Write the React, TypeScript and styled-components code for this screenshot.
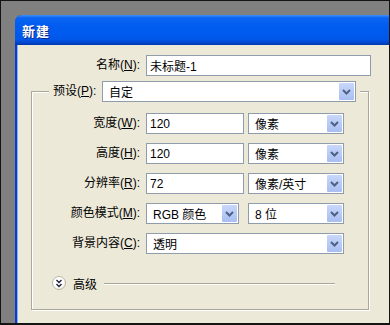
import styled, { createGlobalStyle } from 'styled-components';

const GlobalStyle = createGlobalStyle`
  html, body {
    margin: 0;
    padding: 0;
  }
  body {
    font-family: "Liberation Sans", "Noto Sans CJK SC", sans-serif;
    font-size: 12px;
    color: #000;
  }
`;

const Screen = styled.div`
  box-sizing: border-box;
  width: 390px;
  height: 325px;
  border: 1px solid #141414;
  border-bottom-width: 2px;
  background: #808080;
  padding: 14px 0 0 14px;
  overflow: hidden;
`;

const Window = styled.div`
  width: 400px;
  height: 330px;
  display: flex;
  flex-direction: column;
  border-radius: 7px 7px 0 0;
  overflow: hidden;
  background: #0a3cd0;
`;

const TitleBar = styled.div`
  flex: none;
  height: 30px;
  display: flex;
  align-items: center;
  padding-left: 7px;
  background: linear-gradient(
    #3d8ff8 0,
    #0a63f2 3px,
    #005cf0 40%,
    #0058ea 80%,
    #0047cf 92%,
    #0036a8 100%
  );
  color: #fff;
  font-weight: bold;
  font-size: 13px;
  letter-spacing: 1px;
  text-shadow: 1px 1px 0 #0a2a8a;
`;

const Body = styled.div`
  flex: 1;
  border-left: 2px solid #0b3bc9;
  box-shadow: inset 1px 0 0 #86aef2;
  background: #ece9d8;
  padding: 10px 0 0 14px;
`;

const Row = styled.div<{ $labelWidth: number }>`
  display: flex;
  align-items: center;
  height: 21px;

  & > label {
    width: ${(p) => p.$labelWidth}px;
  }
`;

const Label = styled.label`
  flex: none;
  text-align: right;
  margin-right: 6px;
  white-space: nowrap;
  font-family: "Liberation Sans", "Noto Sans CJK SC", sans-serif;
  font-size: 12px;
  line-height: 21px;

  u {
    text-underline-offset: 1px;
  }
`;

const TextBox = styled.div<{ $width: number }>`
  box-sizing: border-box;
  width: ${(p) => p.$width}px;
  height: 21px;
  border: 1px solid #8e9cab;
  background: #fff;
  padding-left: 3px;
  display: flex;
  align-items: center;
  font-family: "Liberation Sans", "Noto Sans CJK SC", sans-serif;
  font-size: 12px;
`;

const Combo = styled.div<{ $width: number; $gap?: number }>`
  box-sizing: border-box;
  flex: none;
  width: ${(p) => p.$width}px;
  height: 21px;
  margin-left: ${(p) => p.$gap ?? 0}px;
  border: 1px solid #8e9cab;
  background: #fff;
  padding-left: 6px;
  display: flex;
  align-items: center;
  font-family: "Liberation Sans", "Noto Sans CJK SC", sans-serif;
  font-size: 12px;
`;

const DropButton = styled.span`
  margin-left: auto;
  margin-right: 1px;
  width: 15px;
  height: 17px;
  border-radius: 1px;
  background: linear-gradient(#c9d7fb, #b5c8f5 60%, #a9bef2);
  display: flex;
  align-items: center;
  justify-content: center;
`;

const GroupBox = styled.fieldset`
  box-sizing: border-box;
  width: 338px;
  margin: 5px 0 0 0;
  padding: 11px 0 19px 0;
  border: 1px solid #aca899;
  box-shadow: 1px 1px 0 #fff, inset 1px 1px 0 #fff;
  min-width: 0;
`;

const Legend = styled.legend`
  display: flex;
  align-items: center;
  gap: 4px;
  margin-left: 17px;
  padding: 0 4px;
  background: #ece9d8;

  & > label {
    width: 45px;
    text-align: left;
    margin-right: 0;
  }
`;

const Rows = styled.div`
  display: flex;
  flex-direction: column;
  gap: 9px;
`;

const AdvancedRow = styled.div`
  display: flex;
  align-items: center;
  margin-top: 22px;
  padding-left: 20px;
  height: 14px;
`;

const ExpandButton = styled.span`
  box-sizing: border-box;
  width: 14px;
  height: 14px;
  border-radius: 50%;
  border: 1px solid #b9b6a6;
  background: radial-gradient(circle at 40% 35%, #fff 45%, #e4e1d3);
  display: flex;
  align-items: center;
  justify-content: center;
`;

const AdvancedText = styled.span`
  margin-left: 7px;
  font-family: "Noto Sans CJK SC", sans-serif;
  font-size: 12px;
`;

const Rule = styled.span`
  flex: 1;
  margin: 0 33px 0 7px;
  height: 1px;
  background: #aca899;
  box-shadow: 0 1px 0 #fff;
`;

const Chevron = () => (
  <svg width="9" height="6" viewBox="0 0 9 6">
    <path d="M1 1 L4.5 4.5 L8 1" fill="none" stroke="#4d6185" strokeWidth="2" />
  </svg>
);

const DoubleChevron = () => (
  <svg width="8" height="9" viewBox="0 0 8 9">
    <path d="M1.5 1 L4 3.5 L6.5 1 M1.5 5 L4 7.5 L6.5 5" fill="none" stroke="#1e1e3a" strokeWidth="1.4" />
  </svg>
);

const Select = ({ value, width, gap }: { value: string; width: number; gap?: number }) => (
  <Combo $width={width} $gap={gap}>
    <span>{value}</span>
    <DropButton>
      <Chevron />
    </DropButton>
  </Combo>
);

const fields = [
  { name: '宽度', key: 'W', value: '120', unit: '像素' },
  { name: '高度', key: 'H', value: '120', unit: '像素' },
  { name: '分辨率', key: 'R', value: '72', unit: '像素/英寸' },
];

const App = () => (
  <>
    <GlobalStyle />
    <Screen>
      <Window>
        <TitleBar>新建</TitleBar>
        <Body>
          <Row $labelWidth={109}>
            <Label>名称(<u>N</u>):</Label>
            <TextBox $width={225}>未标题-1</TextBox>
          </Row>
          <GroupBox>
            <Legend>
              <Label>预设(<u>P</u>):</Label>
              <Select value="自定" width={254} />
            </Legend>
            <Rows>
              {fields.map((f) => (
                <Row key={f.key} $labelWidth={108}>
                  <Label>{f.name}(<u>{f.key}</u>):</Label>
                  <TextBox $width={98}>{f.value}</TextBox>
                  <Select value={f.unit} width={96} gap={4} />
                </Row>
              ))}
              <Row $labelWidth={108}>
                <Label>颜色模式(<u>M</u>):</Label>
                <Select value="RGB 颜色" width={93} />
                <Select value="8 位" width={96} gap={9} />
              </Row>
              <Row $labelWidth={108}>
                <Label>背景内容(<u>C</u>):</Label>
                <Select value="透明" width={198} />
              </Row>
            </Rows>
            <AdvancedRow>
              <ExpandButton>
                <DoubleChevron />
              </ExpandButton>
              <AdvancedText>高级</AdvancedText>
              <Rule />
            </AdvancedRow>
          </GroupBox>
        </Body>
      </Window>
    </Screen>
  </>
);

export default App;
